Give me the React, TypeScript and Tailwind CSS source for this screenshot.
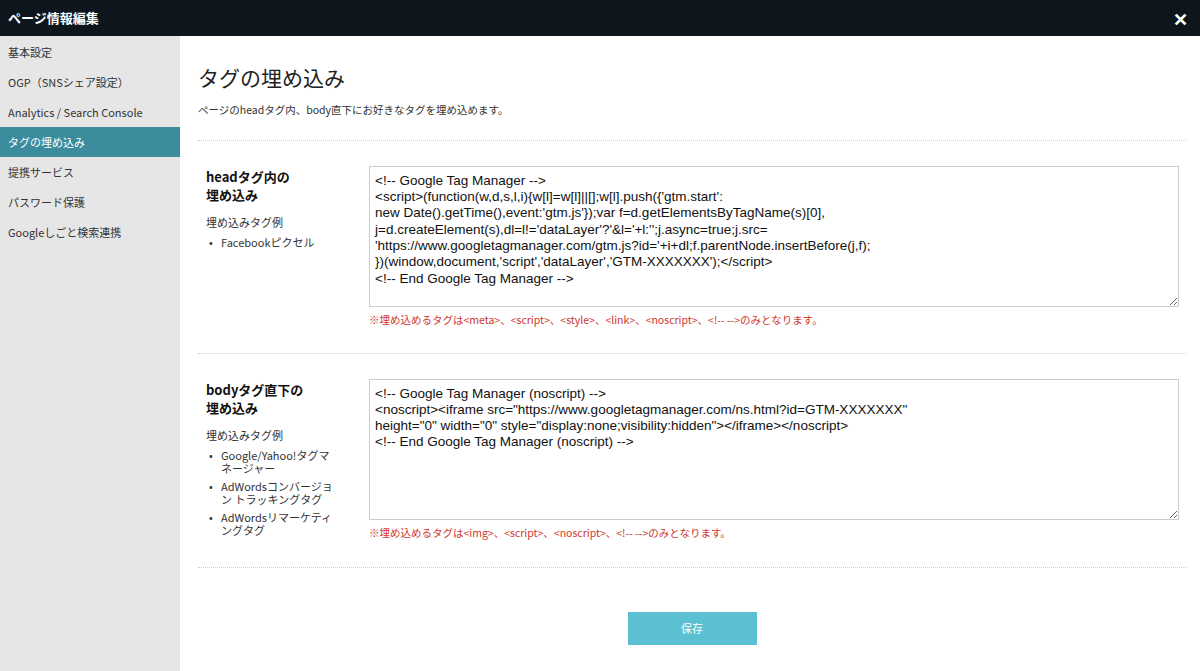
import React from "react";

const headCode = `<!-- Google Tag Manager -->
<script>(function(w,d,s,l,i){w[l]=w[l]||[];w[l].push({'gtm.start':
new Date().getTime(),event:'gtm.js'});var f=d.getElementsByTagName(s)[0],
j=d.createElement(s),dl=l!='dataLayer'?'&l='+l:'';j.async=true;j.src=
'https://www.googletagmanager.com/gtm.js?id='+i+dl;f.parentNode.insertBefore(j,f);
})(window,document,'script','dataLayer','GTM-XXXXXXX');</script>
<!-- End Google Tag Manager -->`;

const bodyCode = `<!-- Google Tag Manager (noscript) -->
<noscript><iframe src="https://www.googletagmanager.com/ns.html?id=GTM-XXXXXXX"
height="0" width="0" style="display:none;visibility:hidden"></iframe></noscript>
<!-- End Google Tag Manager (noscript) -->`;

const menu = ["基本設定", "OGP（SNSシェア設定）", "Analytics / Search Console", "タグの埋め込み", "提携サービス", "パスワード保護", "Googleしごと検索連携"];

function Section({ title1, title2, items, code, note }: { title1: string; title2: string; items: string[]; code: string; note: string }) {
  return (
    <div className="flex border-b border-dotted border-[#ccc] pt-[25px] pb-[25px]">
      <div className="w-[171px] pl-2 shrink-0">
        <div className="text-[13px] font-bold leading-[18px] text-[#111] mt-[2px]">{title1}<br />{title2}</div>
        <div className="text-[11px] text-[#333] mt-[10px]">埋め込みタグ例</div>
        <ul className="mt-[6px] text-[11px] text-[#333] leading-[13px]">
          {items.map((t) => (
            <li key={t} className="flex mb-[5px]"><span className="w-[15px] shrink-0 pl-[3px]">•</span><span className="w-[112px]">{t}</span></li>
          ))}
        </ul>
      </div>
      <div className="flex-1">
        <textarea
          spellCheck={false}
          defaultValue={code}
          className="block w-[810px] h-[141px] border border-[#ccc] px-[5px] py-[6px] text-[13.5px] leading-[16.3px] text-[#111] resize-y outline-none"
          style={{ fontFamily: '"Liberation Sans", Arial, sans-serif', whiteSpace: "pre", overflow: "hidden" }}
        />
        <div className="text-[10.5px] text-[#d0342c] mt-[5px]">{note}</div>
      </div>
    </div>
  );
}

export default function App() {
  return (
    <div className="w-[1200px] h-[671px] overflow-hidden flex flex-col bg-white" style={{ fontFamily: '"Noto Sans CJK JP", "Noto Sans", sans-serif' }}>
      <div className="h-[36px] shrink-0 bg-[#0c161c] flex items-center justify-between px-2">
        <span className="text-white font-bold text-[13px]">ページ情報編集</span>
        <span className="text-white text-[18px] font-bold mr-1">✕</span>
      </div>
      <div className="flex flex-1">
        <div className="w-[180px] shrink-0 bg-[#e6e6e6]">
          <div className="h-[1px]" />
          {menu.map((m, i) => (
            <div key={m} className={`h-[30px] flex items-center px-2 text-[11px] ${i === 3 ? "bg-[#3b8d9e] text-white" : "text-[#333]"}`}>{m}</div>
          ))}
        </div>
        <div className="flex-1 pl-[18px] pr-[14px]">
          <h1 className="text-[21px] text-[#222] mt-[26px] leading-[30px]">タグの埋め込み</h1>
          <p className="text-[10.5px] text-[#333] mt-[10px] pb-[22px] border-b border-dotted border-[#ccc]">ページのheadタグ内、body直下にお好きなタグを埋め込めます。</p>
          <Section title1="headタグ内の" title2="埋め込み" items={["Facebookピクセル"]} code={headCode} note="※埋め込めるタグは<meta>、<script>、<style>、<link>、<noscript>、<!-- -->のみとなります。" />
          <Section title1="bodyタグ直下の" title2="埋め込み" items={["Google/Yahoo!タグマネージャー", "AdWordsコンバージョン トラッキングタグ", "AdWordsリマーケティングタグ"]} code={bodyCode} note="※埋め込めるタグは<img>、<script>、<noscript>、<!-- -->のみとなります。" />
          <div className="flex justify-center mt-[44px]">
            <button className="w-[129px] h-[33px] bg-[#5bc0d1] text-white text-[11px]">保存</button>
          </div>
        </div>
      </div>
    </div>
  );
}
